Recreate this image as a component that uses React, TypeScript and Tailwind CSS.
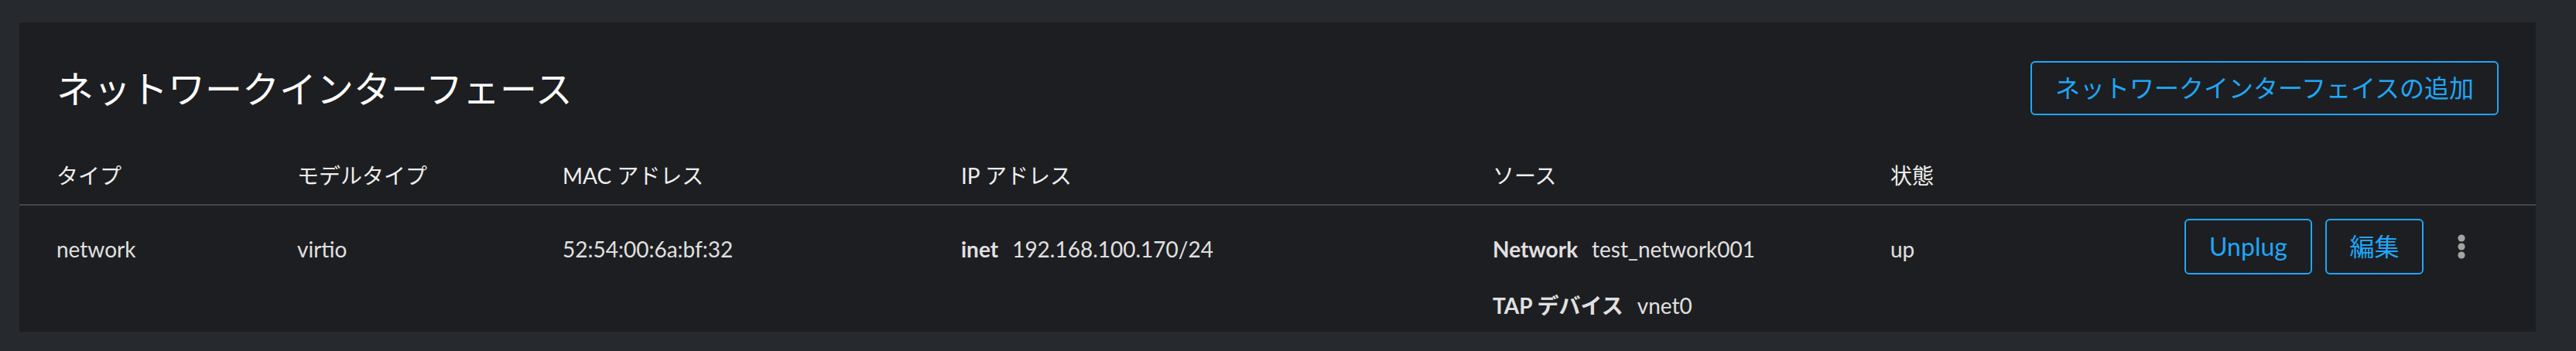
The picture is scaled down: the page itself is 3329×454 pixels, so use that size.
import React from "react";

const FONT = { fontFamily: "Lato, 'Noto Sans CJK JP', sans-serif" };

function Kebab() {
  return (
    <svg width="10" height="32" viewBox="0 0 10 32" aria-hidden="true">
      <circle cx="5" cy="5" r="4.6" fill="#a3a3a3" />
      <circle cx="5" cy="16" r="4.6" fill="#a3a3a3" />
      <circle cx="5" cy="27" r="4.6" fill="#a3a3a3" />
    </svg>
  );
}

export default function App() {
  return (
    <div
      className="w-full h-[454px] bg-[#26292d] pt-[29px] pl-[25px] pr-[52px] pb-[25px]"
      style={FONT}
    >
      <div className="h-[400px] bg-[#1d1e21] flex flex-col">
        {/* card header */}
        <div className="flex items-center justify-between pt-[49px] px-[48px]">
          <h2 className="text-[48px] leading-[70px] text-white font-normal mt-[2px]">
            ネットワークインターフェース
          </h2>
          <button className="h-[70px] px-[30px] border-2 border-[#1fa7f8] rounded-[6px] text-[#1fa7f8] text-[32px] leading-none">
            ネットワークインターフェイスの追加
          </button>
        </div>

        {/* table header */}
        <div className="h-[114px] flex items-end pb-[16px] pl-[48px] text-[28px] leading-[42px] text-[#eeeeee]">
          <div className="w-[311px]">タイプ</div>
          <div className="w-[343px]">モデルタイプ</div>
          <div className="w-[515px]">MAC アドレス</div>
          <div className="w-[687px]">IP アドレス</div>
          <div className="w-[514px]">ソース</div>
          <div>状態</div>
        </div>
        <div className="h-[2px] bg-[#444548]" />

        {/* table row */}
        <div className="flex-1 flex pl-[48px] text-[28px] leading-[42px] text-[#e0e0e0]">
          <div className="w-[311px] pt-[35px]">network</div>
          <div className="w-[343px] pt-[35px]">virtio</div>
          <div className="w-[515px] pt-[35px]">52:54:00:6a:bf:32</div>
          <div className="w-[687px] pt-[35px] flex gap-[18px]">
            <span className="font-bold">inet</span>
            <span>192.168.100.170/24</span>
          </div>
          <div className="w-[514px] pt-[35px] flex flex-col gap-[31px]">
            <div className="flex gap-[18px]">
              <span className="font-bold">Network</span>
              <span>test_network001</span>
            </div>
            <div className="flex gap-[18px]">
              <span className="font-bold">TAP デバイス</span>
              <span>vnet0</span>
            </div>
          </div>
          <div className="pt-[35px] w-[378px]">up</div>
          <div className="flex-1 flex justify-end items-start pt-[17px] pr-[63px]">
            <button className="w-[165px] h-[72px] border-2 border-[#1fa7f8] rounded-[6px] text-[#1fa7f8] text-[32px] leading-none">
              Unplug
            </button>
            <button className="ml-[17px] w-[127px] h-[72px] border-2 border-[#1fa7f8] rounded-[6px] text-[#1fa7f8] text-[32px] leading-none">
              編集
            </button>
            <button className="ml-[16px] w-[66px] h-[72px] flex items-center justify-center">
              <Kebab />
            </button>
          </div>
        </div>
      </div>
    </div>
  );
}
